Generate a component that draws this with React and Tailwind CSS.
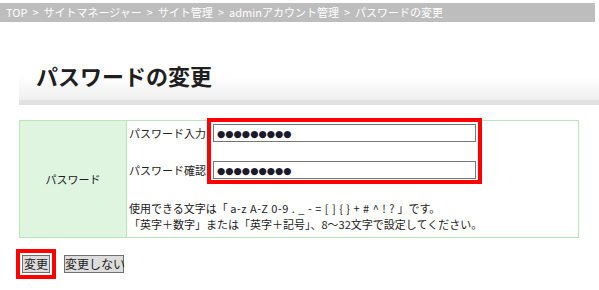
import React from 'react';

const crumbs = ['TOP', 'サイトマネージャー', 'サイト管理', 'adminアカウント管理', 'パスワードの変更'];

function Breadcrumb() {
  return (
    <div className="mt-[3px] mr-[4px] h-[19px] bg-[#bdbdbd] pl-[6px] text-[11px] leading-[19px] text-white whitespace-nowrap">
      {crumbs.map((c, i) => (
        <span key={c}>
          {i > 0 && <span className="mx-[5px]">&gt;</span>}
          {c}
        </span>
      ))}
    </div>
  );
}

function PasswordRow({ label }) {
  return (
    <div className="flex items-center h-[18px]">
      <span className="w-[84px] text-[11px] leading-[18px] whitespace-nowrap">{label}</span>
      <input
        type="text"
        value="●●●●●●●●●"
        readOnly
        className="w-[263px] h-[18px] border border-[#777] bg-white px-[3px] text-[9.5px] text-[#1a1a2a] outline-none"
        style={{ fontFamily: '"DejaVu Sans", sans-serif' }}
      />
    </div>
  );
}

export default function App() {
  return (
    <div className="w-[599px] h-[290px] bg-white text-[#222] overflow-hidden" style={{ fontFamily: '"Noto Sans CJK JP", "Noto Sans", sans-serif' }}>
      <Breadcrumb />

      {/* 見出し */}
      <div className="ml-[19px] mt-[31px] h-[52px] border-b-[5px] border-[#e1e1e1] bg-gradient-to-b from-white via-white to-[#efefef] pl-[17px] flex items-center">
        <h1 className="text-[22px] font-bold leading-none text-[#1f1f1f] -mt-[4px]">パスワードの変更</h1>
      </div>

      {/* フォーム */}
      <div className="ml-[19px] mt-[15px] w-[560px] h-[118px] border border-[#b8e6b8] flex">
        <div className="w-[107px] bg-[#dff5df] border-r border-[#b8e6b8] flex items-center justify-center text-[11px]">
          パスワード
        </div>
        <div className="relative flex-1 pl-[2px] pt-[3px]">
          <PasswordRow label="パスワード入力" />
          <div className="mt-[19px]">
            <PasswordRow label="パスワード確認" />
          </div>
          <div className="mt-[21px] text-[11px] leading-[16px] whitespace-nowrap">
            <div>
              使用できる文字は「 <span className="tracking-[0.5px]">a-z A-Z 0-9 . _ - = [ ] {'{'} {'}'} + # ^ ! ?</span> 」です。
            </div>
            <div>「英字＋数字」または「英字＋記号」、8〜32文字で設定してください。</div>
          </div>
          {/* 注目枠 */}
          <div className="absolute left-[80px] top-[-3px] w-[275px] h-[66px] border-4 border-[#ff0000] pointer-events-none" />
        </div>
      </div>

      {/* ボタン */}
      <div className="ml-[16px] mt-[11px] flex items-center">
        <div className="border-4 border-[#ff0000] p-[2px]">
          <button className="block w-[28px] h-[18px] bg-[#dddddd] border border-[#707070] text-[12px] leading-[16px] text-[#222] p-0">変更</button>
        </div>
        <button className="ml-[8px] w-[60px] h-[18px] bg-[#dddddd] border border-[#707070] text-[12px] leading-[16px] text-[#222] p-0 whitespace-nowrap">変更しない</button>
      </div>
    </div>
  );
}
